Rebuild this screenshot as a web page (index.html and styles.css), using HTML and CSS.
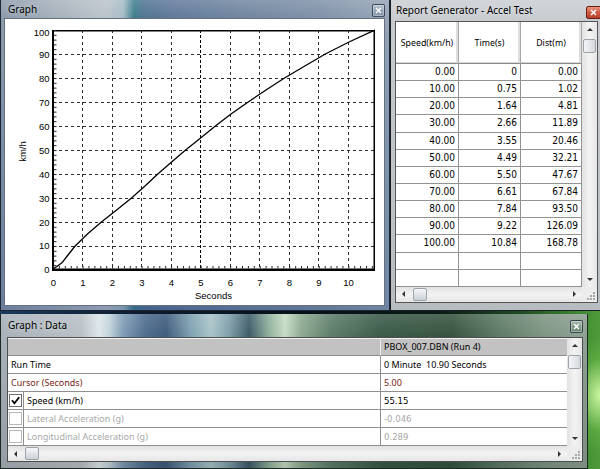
FILE: index.html
```html
<!DOCTYPE html>
<html>
<head>
<meta charset="utf-8">
<link rel="stylesheet" href="styles.css">
</head>
<body>
<div class="desktop">
  <div class="top-row">
    <section class="win win-graph">
      <div class="titlebar tb-graph">
        <span class="title">Graph</span>
        <span class="close close-glass"><svg width="7" height="7" viewBox="0 0 7 7"><path d="M1 1L6 6M6 1L1 6" stroke="#fff" stroke-width="1.4"/></svg></span>
      </div>
      <div class="client graph-client">
        <svg class="chart" width="379" height="286" viewBox="5 19 379 286">
          <defs>
            <pattern id="dh" patternUnits="userSpaceOnUse" x="53" y="0" width="6" height="320"><rect width="3" height="320" fill="#2e2e2e"/></pattern>
            <pattern id="dv" patternUnits="userSpaceOnUse" x="0" y="30" width="400" height="6"><rect width="400" height="3" fill="#2e2e2e"/></pattern>
            <pattern id="dc" patternUnits="userSpaceOnUse" x="0" y="30" width="400" height="5"><rect width="400" height="3" fill="#000"/></pattern>
            <pattern id="tx" patternUnits="userSpaceOnUse" x="53" y="0" width="5.906" height="320"><rect width="1" height="320" fill="#222"/></pattern>
            <pattern id="ty" patternUnits="userSpaceOnUse" x="0" y="270" width="400" height="4.8"><rect width="400" height="1" fill="#222"/></pattern>
          </defs>
          <g fill="url(#dh)">
            <rect x="54" y="54" width="321" height="1"/>
            <rect x="54" y="78" width="321" height="1"/>
            <rect x="54" y="102" width="321" height="1"/>
            <rect x="54" y="126" width="321" height="1"/>
            <rect x="54" y="150" width="321" height="1"/>
            <rect x="54" y="174" width="321" height="1"/>
            <rect x="54" y="198" width="321" height="1"/>
            <rect x="54" y="222" width="321" height="1"/>
            <rect x="54" y="246" width="321" height="1"/>
          </g>
          <g fill="url(#dv)">
            <rect x="82" y="30" width="1" height="239"/>
            <rect x="112" y="30" width="1" height="239"/>
            <rect x="141" y="30" width="1" height="239"/>
            <rect x="171" y="30" width="1" height="239"/>
            <rect x="230" y="30" width="1" height="239"/>
            <rect x="259" y="30" width="1" height="239"/>
            <rect x="289" y="30" width="1" height="239"/>
            <rect x="318" y="30" width="1" height="239"/>
            <rect x="348" y="30" width="1" height="239"/>
          </g>
          <rect x="200" y="30" width="1" height="239" fill="url(#dc)"/>
          <rect x="53" y="30" width="322" height="1.5" fill="#000"/>
          <rect x="373.5" y="30" width="1.5" height="240" fill="#000"/>
          <rect x="52" y="30" width="2" height="241" fill="#000"/>
          <rect x="52" y="268.5" width="323" height="2.5" fill="#000"/>
          <rect x="53" y="266" width="321" height="2.5" fill="url(#tx)"/>
          <rect x="54" y="30" width="2.5" height="239" fill="url(#ty)"/>
          <polyline points="53,268.8 57,266.5 61.9,262.8 68,255 75.1,246 88,233.5 101.4,222 116,210.5 131.5,198 145,186 157.8,174 171,162.5 185.6,150 200,138.5 215.4,126 231,114 248.2,102 266,90 284.5,78 304,66.5 325.3,54 349,42 373.1,30.8 374.9,30" fill="none" stroke="#000" stroke-width="1.3" stroke-linejoin="round"/>
          <g class="ax">
            <text x="49.5" y="35.5" text-anchor="end">100</text>
            <text x="49.5" y="57.6" text-anchor="end">90</text>
            <text x="49.5" y="81.6" text-anchor="end">80</text>
            <text x="49.5" y="105.6" text-anchor="end">70</text>
            <text x="49.5" y="129.6" text-anchor="end">60</text>
            <text x="49.5" y="153.6" text-anchor="end">50</text>
            <text x="49.5" y="177.6" text-anchor="end">40</text>
            <text x="49.5" y="201.6" text-anchor="end">30</text>
            <text x="49.5" y="225.6" text-anchor="end">20</text>
            <text x="49.5" y="249.4" text-anchor="end">10</text>
            <text x="49.5" y="273.4" text-anchor="end">0</text>
            <text x="53.5" y="286" text-anchor="middle">0</text>
            <text x="83" y="286" text-anchor="middle">1</text>
            <text x="112.5" y="286" text-anchor="middle">2</text>
            <text x="142" y="286" text-anchor="middle">3</text>
            <text x="171.5" y="286" text-anchor="middle">4</text>
            <text x="201" y="286" text-anchor="middle">5</text>
            <text x="230.5" y="286" text-anchor="middle">6</text>
            <text x="260" y="286" text-anchor="middle">7</text>
            <text x="289.5" y="286" text-anchor="middle">8</text>
            <text x="319" y="286" text-anchor="middle">9</text>
            <text x="348.5" y="286" text-anchor="middle">10</text>
            <text x="213.5" y="298.5" text-anchor="middle">Seconds</text>
            <text transform="translate(25.5 151.5) rotate(-90)" text-anchor="middle">km/h</text>
          </g>
        </svg>
      </div>
    </section>

    <section class="win win-report">
      <div class="titlebar tb-report">
        <span class="title">Report Generator - Accel Test</span>
        <span class="close close-red"><svg width="7" height="7" viewBox="0 0 7 7"><path d="M1 1L6 6M6 1L1 6" stroke="#fff" stroke-width="1.5"/></svg></span>
      </div>
      <div class="client rg">
        <div class="rg-h">Speed(km/h)</div><div class="rg-h">Time(s)</div><div class="rg-h">Dist(m)</div>
        <div class="rg-c">0.00</div><div class="rg-c">0</div><div class="rg-c">0.00</div>
        <div class="rg-c">10.00</div><div class="rg-c">0.75</div><div class="rg-c">1.02</div>
        <div class="rg-c">20.00</div><div class="rg-c">1.64</div><div class="rg-c">4.81</div>
        <div class="rg-c">30.00</div><div class="rg-c">2.66</div><div class="rg-c">11.89</div>
        <div class="rg-c">40.00</div><div class="rg-c">3.55</div><div class="rg-c">20.46</div>
        <div class="rg-c">50.00</div><div class="rg-c">4.49</div><div class="rg-c">32.21</div>
        <div class="rg-c">60.00</div><div class="rg-c">5.50</div><div class="rg-c">47.67</div>
        <div class="rg-c">70.00</div><div class="rg-c">6.61</div><div class="rg-c">67.84</div>
        <div class="rg-c">80.00</div><div class="rg-c">7.84</div><div class="rg-c">93.50</div>
        <div class="rg-c">90.00</div><div class="rg-c">9.22</div><div class="rg-c">126.09</div>
        <div class="rg-c">100.00</div><div class="rg-c">10.84</div><div class="rg-c">168.78</div>
        <div class="rg-c"></div><div class="rg-c"></div><div class="rg-c"></div>
        <div class="rg-c"></div><div class="rg-c"></div><div class="rg-c"></div>
        <div class="vscroll rg-vs">
          <div class="sb-btn"><span class="ar ar-up"></span></div>
          <div class="sb-thumb-v"></div>
          <div class="sb-track"></div>
          <div class="sb-btn"><span class="ar ar-down"></span></div>
        </div>
        <div class="hscroll rg-hs">
          <div class="sb-btn-h"><span class="ar ar-left"></span></div>
          <div class="sb-thumb-h"></div>
          <div class="sb-track"></div>
          <div class="sb-btn-h"><span class="ar ar-right"></span></div>
        </div>
        <div class="grip"><svg width="15" height="15" viewBox="0 0 15 15"><g fill="#a9a9a9"><rect x="11" y="11" width="2" height="2"/><rect x="8" y="11" width="2" height="2"/><rect x="11" y="8" width="2" height="2"/><rect x="5" y="11" width="2" height="2"/><rect x="8" y="8" width="2" height="2"/><rect x="11" y="5" width="2" height="2"/></g></svg></div>
      </div>
    </section>
  </div>

  <section class="win win-data">
    <div class="titlebar tb-data">
      <span class="title">Graph : Data</span>
      <span class="close close-glass close-green"><svg width="7" height="7" viewBox="0 0 7 7"><path d="M1 1L6 6M6 1L1 6" stroke="#fff" stroke-width="1.4"/></svg></span>
    </div>
    <div class="client dg">
      <div class="dg-head dg-span"></div>
      <div class="dg-head dg-val">PBOX_007.DBN (Run 4)</div>

      <div class="dg-cell dg-span">Run Time</div>
      <div class="dg-cell dg-val">0 Minute&nbsp; 10.90 Seconds</div>

      <div class="dg-cell dg-span cursor-txt">Cursor (Seconds)</div>
      <div class="dg-cell dg-val cursor-txt">5.00</div>

      <div class="dg-cell dg-chk"><svg width="13" height="13" viewBox="0 0 13 13"><rect x="0.5" y="0.5" width="12" height="12" fill="#fff" stroke="#6f6f6f"/><path d="M3 6.3L5.4 9.2L10.2 3.2" fill="none" stroke="#000" stroke-width="1.8"/></svg></div>
      <div class="dg-cell dg-label">Speed (km/h)</div>
      <div class="dg-cell dg-val num">55.15</div>

      <div class="dg-cell dg-chk"><svg width="13" height="13" viewBox="0 0 13 13"><rect x="0.5" y="0.5" width="12" height="12" fill="#fff" stroke="#b9b9b9"/></svg></div>
      <div class="dg-cell dg-label dim">Lateral Acceleration (g)</div>
      <div class="dg-cell dg-val num dim">-0.046</div>

      <div class="dg-cell dg-chk"><svg width="13" height="13" viewBox="0 0 13 13"><rect x="0.5" y="0.5" width="12" height="12" fill="#fff" stroke="#b9b9b9"/></svg></div>
      <div class="dg-cell dg-label dim">Longitudinal Acceleration (g)</div>
      <div class="dg-cell dg-val num dim">0.289</div>

      <div class="vscroll dg-vs">
        <div class="sb-btn"><span class="ar ar-up"></span></div>
        <div class="sb-thumb-v"></div>
        <div class="sb-track"></div>
        <div class="sb-btn"><span class="ar ar-down"></span></div>
      </div>
      <div class="hscroll dg-hs">
        <div class="sb-btn-h"><span class="ar ar-left"></span></div>
        <div class="sb-thumb-h"></div>
        <div class="sb-track"></div>
        <div class="sb-btn-h"><span class="ar ar-right"></span></div>
      </div>
      <div class="grip"><svg width="15" height="15" viewBox="0 0 15 15"><g fill="#a9a9a9"><rect x="11" y="11" width="2" height="2"/><rect x="8" y="11" width="2" height="2"/><rect x="11" y="8" width="2" height="2"/><rect x="5" y="11" width="2" height="2"/><rect x="8" y="8" width="2" height="2"/><rect x="11" y="5" width="2" height="2"/></g></svg></div>
    </div>
  </section>
</div>
</body>
</html>
```

FILE: styles.css
```css
* { box-sizing: border-box; }
html, body { margin: 0; padding: 0; }
body {
  width: 600px;
  height: 469px;
  overflow: hidden;
  font-family: "Noto Sans", "Open Sans", sans-serif;
  color: #000;
  background:
    radial-gradient(40px 60px at 600px 395px, rgba(215, 255, 170, 0.9), rgba(120, 200, 80, 0.35) 60%, rgba(0, 0, 0, 0) 100%),
    linear-gradient(90deg, #1b3a5c 0, #0e1e30 120px, #06101a 300px, #0b1a16 440px, #1f4a22 520px, #3e8a32 580px, #4f9a3a 600px);
}

.desktop {
  width: 600px;
  height: 469px;
  display: flex;
  flex-direction: column;
  gap: 3px;
}
.top-row {
  display: flex;
  height: 311px;
  flex: none;
}

.win {
  flex: none;
  display: flex;
  flex-direction: column;
}

.titlebar {
  display: flex;
  align-items: flex-start;
  justify-content: space-between;
  flex: none;
}
.title {
  font-size: 10px;
  color: #000;
  text-shadow: 0 0 5px rgba(255, 255, 255, 0.6);
  white-space: nowrap;
}
.close {
  width: 13px;
  height: 13px;
  flex: none;
  display: flex;
  align-items: center;
  justify-content: center;
  border-radius: 2px;
}
.close-glass {
  border: 1px solid rgba(30, 40, 55, 0.75);
  background: linear-gradient(180deg, #b9c4cf 0, #93a4b6 50%, #7f92a7 100%);
  box-shadow: inset 0 0 0 1px rgba(255, 255, 255, 0.35);
}
.close-green {
  background: linear-gradient(180deg, #a9bcae 0, #7f9a86 50%, #6a8572 100%);
}
.close-red {
  width: 16px;
  border: 1px solid #6a1d12;
  background: linear-gradient(180deg, #e8937e 0, #cf5a42 50%, #b8402c 100%);
  justify-content: flex-start;
  padding-left: 3px;
}

/* ---------- Graph window ---------- */
.win-graph {
  width: 390px;
  height: 311px;
  border: 1px solid #1b2632;
  border-top: 0;
  padding: 0 4px 4px 3px;
  background:
    linear-gradient(180deg, rgba(255, 255, 255, 0.15) 0, rgba(255, 255, 255, 0) 18px, rgba(30, 70, 130, 0.15) 40%, rgba(30, 60, 120, 0.3) 100%),
    linear-gradient(90deg, #8c9bab 0, #a9b3bd 60px, #bcc4cc 105px, #a7bcc6 122px, #3f7f8e 133px, #4f7592 142px, #61799a 170px, #7086a0 240px, #8092a8 320px, #97a6b8 390px);
}
.tb-graph { height: 18px; }
.tb-graph .title { line-height: 18px; padding-left: 4px; }
.tb-graph .close { margin-top: 4px; }

.graph-client {
  width: 381px;
  height: 288px;
  background: #fff;
  border: 1px solid #66717d;
}
.chart { display: block; }
.ax text { font-family: "Liberation Sans", Arial, sans-serif; font-size: 9.5px; fill: #000; }

/* ---------- Report window ---------- */
.win-report {
  width: 215px;
  height: 311px;
  border: 1px solid #1a1f25;
  border-top: 0;
  padding: 0 6px 7px 4px;
  background: linear-gradient(180deg, #d3d6d9 0, #c7cbcf 21px, #b7bcc1 100%);
}
.tb-report { height: 21px; }
.tb-report .title { line-height: 21px; padding-left: 1px; }
.tb-report .close { margin-top: 6px; margin-right: -4px; }

.rg {
  width: 203px;
  height: 282px;
  border: 1px solid #565656;
  background: #fff;
  display: grid;
  grid-template-columns: 63px 62px 61px 15px;
  grid-template-rows: 42px repeat(13, 17.15px) 15px;
}
.rg-h {
  display: flex;
  align-items: center;
  justify-content: center;
  font-size: 8.8px;
  border-right: 1px solid #a9a9a9;
  border-bottom: 1px solid #8a8a8a;
  box-shadow: inset -2px 0 0 #dedede, inset 0 -1px 0 #d6d6d6;
}
.rg-c {
  font-family: "DejaVu Sans Condensed", "DejaVu Sans", sans-serif;
  font-stretch: condensed;
  font-size: 10px;
  line-height: 16px;
  text-align: right;
  padding-right: 3px;
  border-right: 1px solid #939393;
  border-bottom: 1px solid #939393;
}
.rg-vs { grid-column: 4; grid-row: 1 / 15; }
.rg-hs { grid-column: 1 / 4; grid-row: 15; }

/* ---------- scrollbars ---------- */
.vscroll {
  display: flex;
  flex-direction: column;
  background: linear-gradient(90deg, #e2e2e2 0, #f3f3f3 50%, #e6e6e6 100%);
}
.hscroll {
  display: flex;
  background: linear-gradient(180deg, #e2e2e2 0, #f3f3f3 50%, #e6e6e6 100%);
}
.sb-btn { height: 15px; flex: none; display: flex; align-items: center; justify-content: center; }
.sb-btn-h { width: 15px; flex: none; display: flex; align-items: center; justify-content: center; }
.sb-track { flex: 1; }
.sb-thumb-v {
  flex: none;
  height: 14px;
  margin: 2px 1px 0;
  border: 1px solid #9da3aa;
  border-radius: 2px;
  background: linear-gradient(90deg, #f4f5f7, #d4d8dd);
}
.sb-thumb-h {
  flex: none;
  width: 14px;
  margin: 1px 0 1px 2px;
  border: 1px solid #9da3aa;
  border-radius: 2px;
  background: linear-gradient(180deg, #f4f5f7, #ccd2d9);
}
.ar { width: 0; height: 0; border: 3px solid transparent; }
.ar-up { border-bottom: 3px solid #333; border-top: 0; }
.ar-down { border-top: 3px solid #333; border-bottom: 0; }
.ar-left { border-right: 3px solid #333; border-left: 0; }
.ar-right { border-left: 3px solid #333; border-right: 0; }
.grip { background: #ececec; }
.grip svg { display: block; }

/* ---------- Data window ---------- */
.win-data {
  width: 588px;
  height: 155px;
  border: 1px solid #1a2a22;
  border-top: 0;
  padding: 0 4px 6px 6px;
  background:
    linear-gradient(180deg, rgba(255, 255, 255, 0.12) 0, rgba(255, 255, 255, 0) 23px, rgba(0, 0, 0, 0.12) 100%),
    linear-gradient(90deg, #a9b1b9 0, #b9c0c6 80px, #dde6ea 98px, #c4d4dc 108px, #7f9cb5 122px, #4d6c8e 145px, #3e5b7c 165px, #7fa2b2 190px, #a9c4c8 210px, #7e9eaa 228px, #3d5a68 248px, #8fb09c 268px, #c7dcc4 284px, #8eab92 300px, #5d7d6a 330px, #3a5a48 380px, #36543f 450px, #5f7c68 500px, #7f9685 545px, #90a294 588px);
}
.tb-data { height: 23px; }
.tb-data .title { line-height: 23px; padding-left: 1px; }
.tb-data .close { margin-top: 6px; }

.dg {
  width: 576px;
  height: 125px;
  border: 1px solid #4e4e4e;
  background: #fff;
  display: grid;
  grid-template-columns: 16px 357px 186px 15px;
  grid-template-rows: repeat(6, 18px) 15px;
  font-size: 9px;
}
.dg-head {
  background: #c2c2c2;
  border-bottom: 1px solid #8c8c8c;
  box-shadow: inset 0 1px 0 #f2f2f2;
  line-height: 17px;
}
.dg-head.dg-span { border-right: 1px solid #ececec; }
.dg-span { grid-column: 1 / 3; padding-left: 3px; }
.dg-val { grid-column: 3; padding-left: 3px; white-space: nowrap; }
.dg-cell {
  line-height: 17px;
  border-bottom: 1px solid #8f8f8f;
  white-space: nowrap;
}
.dg-cell.dg-span, .dg-cell.dg-label { border-right: 1px solid #8f8f8f; }
.dg-chk {
  border-right: 1px solid #8f8f8f;
  display: flex;
  align-items: center;
  padding-left: 1px;
}
.dg-chk svg { display: block; }
.dg-label { padding-left: 3px; }
.num {
  font-family: "DejaVu Sans Condensed", "DejaVu Sans", sans-serif;
  font-stretch: condensed;
  font-size: 9.5px;
}
.cursor-txt { color: #7a1a12; }
.dim { color: #a8a8a8; }
.dg-vs { grid-column: 4; grid-row: 1 / 7; }
.dg-hs { grid-column: 1 / 4; grid-row: 7; }
```
